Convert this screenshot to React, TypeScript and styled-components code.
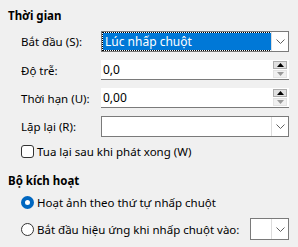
import React from 'react';
import styled, { createGlobalStyle } from 'styled-components';

const Global = createGlobalStyle`
  html, body {
    margin: 0;
    padding: 0;
    background: #f0f0f0;
  }
  body {
    font-family: "Segoe UI", "Noto Sans", "Open Sans", sans-serif;
    font-size: 11.5px;
    color: #000;
  }
`;

const Panel = styled.div`
  width: 298px;
  height: 247px;
  box-sizing: border-box;
  padding: 8px 9px 0 8px;
  display: flex;
  flex-direction: column;
  overflow: hidden;
`;

const Header = styled.div<{ $top?: number }>`
  height: 16px;
  line-height: 16px;
  font-weight: 700;
  margin-top: ${({ $top }) => $top ?? 0}px;
`;

const Row = styled.div<{ $top: number; $h: number }>`
  display: flex;
  align-items: center;
  height: ${({ $h }) => $h}px;
  margin-top: ${({ $top }) => $top}px;
  padding-left: 13px;
`;

const Label = styled.div`
  width: 80px;
  flex: none;
  white-space: nowrap;
`;

const Combo = styled.div<{ $w?: number }>`
  display: flex;
  box-sizing: border-box;
  width: ${({ $w }) => ($w ? `${$w}px` : 'auto')};
  flex: ${({ $w }) => ($w ? 'none' : 1)};
  height: 100%;
  border: 1px solid #7a7a7a;
  background: #fff;
`;

const ComboValue = styled.div<{ $selected?: boolean }>`
  flex: 1;
  display: flex;
  align-items: center;
  padding-left: 2px;
  margin: 1px 0 1px 1px;
  white-space: nowrap;
  overflow: hidden;
  color: ${({ $selected }) => ($selected ? '#fff' : '#000')};
  background: ${({ $selected }) => ($selected ? '#0078d7' : 'transparent')};
  outline: ${({ $selected }) => ($selected ? '1px dotted #000' : 'none')};
  font-size: 12px;
`;

const DropButton = styled.div`
  width: 16px;
  flex: none;
  display: flex;
  align-items: center;
  justify-content: center;
  border-left: 1px solid #dcdcdc;
  background: #fff;
`;

const SpinBox = styled.div`
  flex: 1;
  height: 100%;
  box-sizing: border-box;
  display: flex;
  align-items: center;
  background: #fff;
  border-bottom: 1px solid #7a7a7a;
`;

const SpinValue = styled.div`
  flex: 1;
  padding-left: 2px;
  font-size: 12px;
`;

const SpinButtons = styled.div`
  width: 14px;
  height: 17px;
  margin-right: 2px;
  display: flex;
  flex-direction: column;
  gap: 1px;
`;

const SpinButton = styled.div<{ $disabled?: boolean }>`
  flex: 1;
  display: flex;
  align-items: center;
  justify-content: center;
  background: ${({ $disabled }) => ($disabled ? '#f0f0f0' : '#e1e1e1')};
  border: 1px solid ${({ $disabled }) => ($disabled ? '#e3e3e3' : '#adadad')};
`;

const Check = styled.span`
  width: 13px;
  height: 13px;
  box-sizing: border-box;
  border: 1px solid #333;
  border-radius: 3px;
  background: #fff;
  flex: none;
  margin-right: 3px;
`;

const Radio = styled.span<{ $on?: boolean }>`
  width: 13px;
  height: 13px;
  box-sizing: border-box;
  border-radius: 50%;
  flex: none;
  margin-right: 3px;
  border: ${({ $on }) => ($on ? '4px solid #0067c0' : '1px solid #333')};
  background: #fff;
`;

const Text = styled.span`
  flex: 1;
  white-space: nowrap;
`;

const Chevron = () => (
  <svg width="9" height="5" viewBox="0 0 9 5">
    <path d="M0.5 0.5 L4.5 4.5 L8.5 0.5" fill="none" stroke="#606060" strokeWidth="1" />
  </svg>
);

const Tri = ({ up, color }: { up?: boolean; color: string }) => (
  <svg width="7" height="4" viewBox="0 0 7 4">
    <path d={up ? 'M0 4 L3.5 0 L7 4 Z' : 'M0 0 L3.5 4 L7 0 Z'} fill={color} />
  </svg>
);

function Spin({ value }: { value: string }) {
  return (
    <SpinBox>
      <SpinValue>{value}</SpinValue>
      <SpinButtons>
        <SpinButton>
          <Tri up color="#000" />
        </SpinButton>
        <SpinButton $disabled>
          <Tri color="#9a9a9a" />
        </SpinButton>
      </SpinButtons>
    </SpinBox>
  );
}

export default function App() {
  return (
    <>
      <Global />
      <Panel>
        <Header>Thời gian</Header>
        <Row $top={7} $h={21}>
          <Label>Bắt đầu (S):</Label>
          <Combo>
            <ComboValue $selected>Lúc nhấp chuột</ComboValue>
            <DropButton>
              <Chevron />
            </DropButton>
          </Combo>
        </Row>
        <Row $top={8} $h={20}>
          <Label>Độ trễ:</Label>
          <Spin value="0,0" />
        </Row>
        <Row $top={8} $h={20}>
          <Label>Thời hạn (U):</Label>
          <Spin value="0,00" />
        </Row>
        <Row $top={8} $h={21}>
          <Label>Lặp lại (R):</Label>
          <Combo>
            <ComboValue />
            <DropButton>
              <Chevron />
            </DropButton>
          </Combo>
        </Row>
        <Row $top={6} $h={16}>
          <Check />
          <Text>Tua lại sau khi phát xong (W)</Text>
        </Row>
        <Header $top={14}>Bộ kích hoạt</Header>
        <Row $top={5} $h={16}>
          <Radio $on />
          <Text>Hoạt ảnh theo thứ tự nhấp chuột</Text>
        </Row>
        <Row $top={8} $h={22}>
          <Radio />
          <Text>Bắt đầu hiệu ứng khi nhấp chuột vào:</Text>
          <Combo $w={39}>
            <ComboValue />
            <DropButton>
              <Chevron />
            </DropButton>
          </Combo>
        </Row>
      </Panel>
    </>
  );
}
